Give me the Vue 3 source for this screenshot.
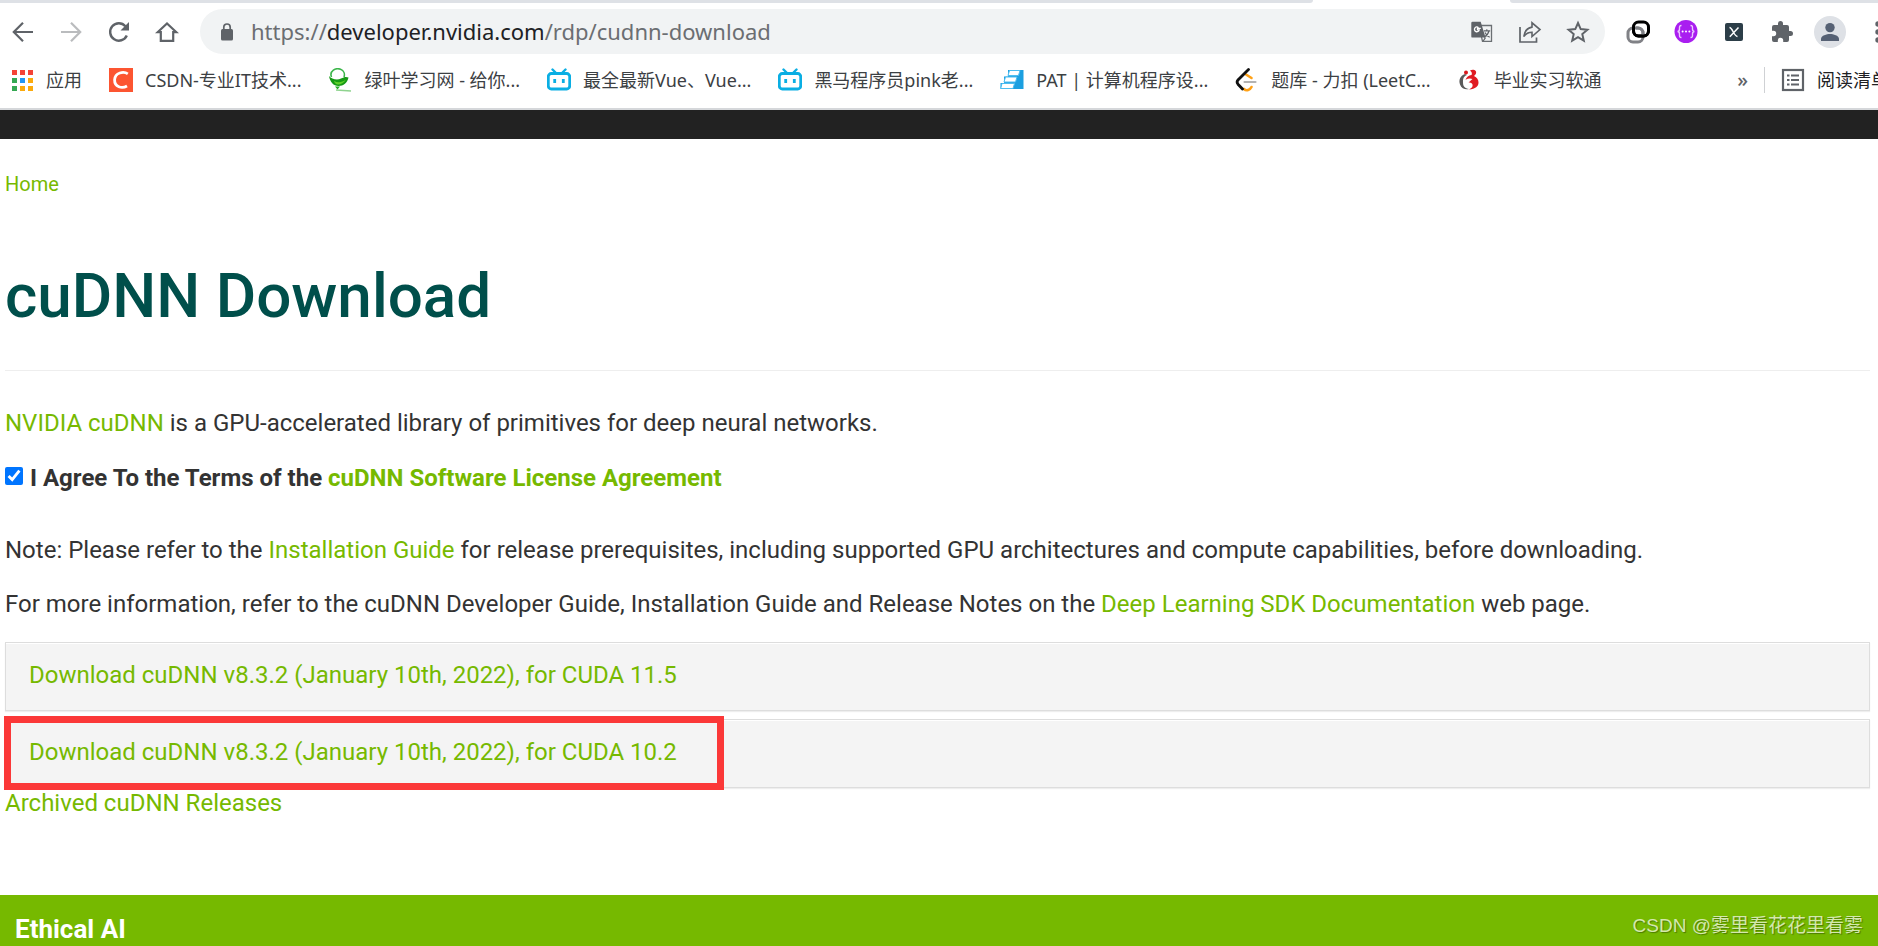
<script setup>
import { ref } from 'vue'

const url = ref('https://developer.nvidia.com/rdp/cudnn-download')
const agreed = ref(true)

const bookmarks = [
  { icon: 'csdn', label: 'CSDN-专业IT技术...' },
  { icon: 'leaf', label: '绿叶学习网 - 给你...' },
  { icon: 'bili', label: '最全最新Vue、Vue...' },
  { icon: 'bili', label: '黑马程序员pink老...' },
  { icon: 'pat', label: 'PAT | 计算机程序设...' },
  { icon: 'leet', label: '题库 - 力扣 (LeetC...' },
  { icon: 'soft', label: '毕业实习软通' }
]

const appColors = ['#f44336', '#f44336', '#f44336', '#34a853', '#2196f3', '#fbaa0c', '#34a853', '#fbaa0c', '#fbaa0c']

const downloads = [
  { label: 'Download cuDNN v8.3.2 (January 10th, 2022), for CUDA 11.5', marked: false },
  { label: 'Download cuDNN v8.3.2 (January 10th, 2022), for CUDA 10.2', marked: true }
]
</script>

<template>
  <div class="page">
    <header class="browser">
      <div class="tabs">
        <div class="tab-left"></div>
        <div class="tab-active"></div>
        <div class="tab-right"></div>
      </div>

      <div class="toolbar">
        <div class="nav">
          <button class="icon-btn" aria-label="Back">
            <svg viewBox="0 0 24 24"><path d="M22 12H3.500M12 2.800L2.800 12l9.200 9.200" fill="none" stroke="#5f6368" stroke-width="2.200" /></svg>
          </button>
          <button class="icon-btn" aria-label="Forward">
            <svg viewBox="0 0 24 24"><path d="M2 12h18.500M12 2.800l9.200 9.200-9.200 9.200" fill="none" stroke="#babcbe" stroke-width="2.200" /></svg>
          </button>
          <button class="icon-btn" aria-label="Reload">
            <svg viewBox="0 0 24 24"><path d="M19.800 15.500A8.700 8.700 0 1 1 18.400 6.200" fill="none" stroke="#5f6368" stroke-width="2.400" /><path d="M22 2v8.500h-8.500z" fill="#5f6368" /></svg>
          </button>
          <button class="icon-btn" aria-label="Home">
            <svg viewBox="0 0 24 24"><path d="M2.600 12.200L12 3.400l9.400 8.800h-3.200v8.700H5.800v-8.700z" fill="none" stroke="#5f6368" stroke-width="2.200" /></svg>
          </button>
        </div>

        <div class="omnibox">
          <svg class="lock" viewBox="0 0 14 18"><rect x="1" y="6" width="12" height="11.500" rx="1.500" fill="#5f6368" /><path d="M3.800 7V4.200a3.200 3.200 0 0 1 6.400 0V7" fill="none" stroke="#5f6368" stroke-width="1.700" /></svg>
          <a class="url" href="#" :aria-label="url">https://<span class="host">developer.nvidia.com</span>/rdp/cudnn-download</a>
          <button class="icon-btn" aria-label="Translate">
            <svg viewBox="0 0 24 24">
              <path d="M9 5.500h12.500v15.800H12.500z" fill="#f1f3f4" stroke="#6b6f73" stroke-width="1.300" />
              <path d="M2.500 1.800h8.200l4.800 15.800h-13a1.200 1.200 0 0 1-1.200-1.200V3a1.200 1.200 0 0 1 1.200-1.200z" fill="#5f6368" />
              <path d="M10.800 8.300H7.500v1.500h1.700A2.400 2.400 0 1 1 8.500 7.600" fill="none" stroke="#fff" stroke-width="1.300" />
              <path d="M13.800 10.800h6.400M16.800 9.200v1.600M19 10.800c-.7 3-2.500 5-5 6.500M15 12.500c1 2.200 2.500 3.500 4.700 4.700M13.200 21l2.300-3.400" fill="none" stroke="#5f6368" stroke-width="1.200" />
            </svg>
          </button>
          <button class="icon-btn" aria-label="Share">
            <svg viewBox="0 0 24 24"><path d="M2 7v15h16.500v-4.500" fill="none" stroke="#5f6368" stroke-width="1.700" /><path d="M14 2.800v4.300C8.500 8 6.500 11.500 5.800 16.500 8 13.500 10.500 12.300 14 12.300v4.200l8-6.900z" fill="none" stroke="#5f6368" stroke-width="1.600" /></svg>
          </button>
          <button class="icon-btn" aria-label="Bookmark this page">
            <svg viewBox="0 0 24 24"><path d="M12 3l2.700 6.100 6.700.6-5.100 4.400 1.500 6.500-5.800-3.400-5.800 3.400 1.500-6.500-5.100-4.400 6.700-.6z" fill="none" stroke="#5f6368" stroke-width="2" /></svg>
          </button>
        </div>

        <div class="extensions">
          <button class="icon-btn" aria-label="Link extension">
            <svg viewBox="0 0 24 24">
              <rect x="2" y="8" width="15" height="14" rx="5" fill="none" stroke="#808186" stroke-width="3" />
              <rect x="7.500" y="2" width="15" height="14" rx="5" fill="none" stroke="#000" stroke-width="3" />
              <path d="M10 8h2a5 5 0 0 1 5 5v3" fill="none" stroke="#808186" stroke-width="3" />
              <path d="M7.500 8v3a5 5 0 0 0 5 5h5a5 5 0 0 0 5-5" fill="none" stroke="#000" stroke-width="3" />
            </svg>
          </button>
          <button class="icon-btn" aria-label="Code extension">
            <svg viewBox="0 0 24 24"><circle cx="12" cy="11.500" r="11.500" fill="#a91ef0" /><path d="M7.500 5.500c-2.300 0-2 1.500-2 3.500 0 1.500-.6 2.500-2 2.500 1.400 0 2 1 2 2.500 0 2-.3 3.500 2 3.500M16.500 5.500c2.300 0 2 1.500 2 3.500 0 1.500.6 2.500 2 2.500-1.400 0-2 1-2 2.500 0 2 .3 3.500-2 3.500" fill="none" stroke="#ecc8ff" stroke-width="1.400" /><g fill="#fff"><circle cx="8.600" cy="11.500" r="1" /><circle cx="12" cy="11.500" r="1" /><circle cx="15.400" cy="11.500" r="1" /></g></svg>
          </button>
          <button class="icon-btn" aria-label="XPath extension">
            <svg viewBox="0 0 24 24"><rect x="3" y="3" width="18" height="18" rx="2" fill="#2c3e48" /><path d="M7.500 7.500c3 0 4.500 9 8 9M16.500 7.500L7.800 16.800" fill="none" stroke="#fff" stroke-width="1.500" /></svg>
          </button>
          <button class="icon-btn" aria-label="Extensions">
            <svg viewBox="0 0 24 24"><path d="M20.500 11H19V7a2 2 0 0 0-2-2h-4V3.500a2.500 2.500 0 0 0-5 0V5H4a2 2 0 0 0-2 2v3.800h1.500a2.700 2.700 0 0 1 0 5.400H2V20a2 2 0 0 0 2 2h3.800v-1.500a2.700 2.700 0 0 1 5.400 0V22H17a2 2 0 0 0 2-2v-4h1.500a2.500 2.500 0 0 0 0-5z" fill="#5f6368" /></svg>
          </button>
          <button class="icon-btn avatar" aria-label="Profile">
            <svg viewBox="0 0 24 24"><circle cx="12" cy="7.600" r="4.700" fill="#566174" /><path d="M3 21v-2.200c0-3.300 5.800-4.800 9-4.800s9 1.500 9 4.800V21z" fill="#566174" /></svg>
          </button>
          <button class="icon-btn" aria-label="Menu">
            <svg viewBox="0 0 24 24"><g fill="#5f6368"><circle cx="12" cy="4" r="2.700" /><circle cx="12" cy="12" r="2.700" /><circle cx="12" cy="20" r="2.700" /></g></svg>
          </button>
        </div>
      </div>

      <nav class="bookmarks" aria-label="Bookmarks">
        <a class="bookmark apps" href="#">
          <svg viewBox="0 0 24 24"><rect v-for="(c, i) in appColors" :key="i" :x="2 + (i % 3) * 8" :y="2 + Math.floor(i / 3) * 8" width="5" height="5" :fill="c" /></svg>
          <span>应用</span>
        </a>
        <a v-for="b in bookmarks" :key="b.label" class="bookmark" href="#">
          <svg v-if="b.icon === 'csdn'" viewBox="0 0 24 24"><rect width="24" height="24" fill="#fc5531" /><path d="M18.800 5.800c-4-2.700-12.800-1.500-13.200 6-.2 7.500 7.500 9 12.400 6.200" fill="none" stroke="#fff" stroke-width="2.800" /></svg>
          <svg v-else-if="b.icon === 'leaf'" viewBox="0 0 24 24"><path d="M3.500 9C1 3 8-.5 12.500 1.200 16 2.500 17 6 16 9" fill="none" stroke="#3bb54a" stroke-width="1.600" /><path d="M1 8c2.500 3 8 4.500 12 2.500 3-1.500 5-2 7.500-1-1 5-5 8.500-10 8.500C5.500 18 2 14 1 8z" fill="#159a15" /><path d="M6 13c4 2 8 1.500 12-1.500-2 3.500-5 5-8 5-2 0-3.500-1.500-4-3.500z" fill="#5fd02a" /><path d="M7 18.500h5l-2.500 3z" fill="#27ad27" /><path d="M8 22l15 1" stroke="#8fd38f" stroke-width="1.300" /></svg>
          <svg v-else-if="b.icon === 'bili'" viewBox="0 0 24 24"><path d="M5.500 1.500l3.500 3.500M18.500 1.500L15 5" stroke="#0aaee3" stroke-width="2.400" stroke-linecap="round" /><rect x="1.300" y="5.500" width="21.400" height="15.500" rx="3" fill="#fff" stroke="#0aaee3" stroke-width="2.800" /><path d="M7.700 11v4M16.300 11v4" stroke="#0aaee3" stroke-width="2.800" /></svg>
          <svg v-else-if="b.icon === 'pat'" viewBox="0 0 24 24"><path d="M8 2h15.500v19H.500v-6H4V8.500h4z" fill="#1b9fe0" /><g fill="#fff" stroke="#4dbdf0" stroke-width="1"><path d="M9.500 2.500H20l-1.500 5H8z" /><path d="M5.500 9H17l-1.500 5H4z" /><path d="M2 15.500h12.500l-1.500 5H.700z" /></g></svg>
          <svg v-else-if="b.icon === 'leet'" viewBox="0 0 24 24"><g fill="none" stroke-width="2.600" stroke-linecap="round"><path d="M11 6.500l5.500 3.500" stroke="#ffa116" /><path d="M9 21c2.500 2.500 6 1 7.500-2" stroke="#ffa116" /><path d="M9.500 14h11" stroke="#b3b3b3" stroke-width="2.200" /><path d="M13.500 1.500L3 12c-1.300 1.500-1 3 0 4.200L7.500 21" stroke="#111" stroke-width="2.800" /></g></svg>
          <svg v-else viewBox="0 0 24 24"><path d="M7 6C2 8 .500 12 2 16.500s6 5.500 9 4.500c-4-.5-6-2.500-6-6.500S5.500 8.500 9 7z" fill="#5a5a5a" /><circle cx="8" cy="4.500" r="2" fill="#d9191d" /><path d="M12 2.500c3-1.500 7-.5 6 3-.3 1-1 1.800-2 2.500 3 1.500 4.500 3.500 4.500 6.500 0 4-3 6.500-9.500 7 3-1.500 4-3 3.500-5-.5-1.500-2-2-4-2l4-3.500c-2-1-4.500-.8-7 .8C8.500 9 10.500 7.500 13.500 7c.8-1.200.5-3-1.500-4.500z" fill="#e01b22" /></svg>
          <span>{{ b.label }}</span>
        </a>
        <div class="bookmarks-end">
          <button class="more" aria-label="More bookmarks">»</button>
          <a class="bookmark reading" href="#">
            <svg viewBox="0 0 24 24"><rect x="2" y="2" width="20" height="20" fill="none" stroke="#5f6368" stroke-width="2.200" /><path d="M6 7.500h2.500M6 12h2.500M6 16.500h2.500M10 7.500h8M10 12h8M10 16.500h8" stroke="#5f6368" stroke-width="2" /></svg>
            <span>阅读清单</span>
          </a>
        </div>
      </nav>
    </header>

    <div class="site-bar"></div>

    <main class="content">
      <a class="crumb" href="#">Home</a>
      <h1>cuDNN Download</h1>
      <hr />
      <p><a href="#">NVIDIA cuDNN</a> is a GPU-accelerated library of primitives for deep neural networks.</p>
      <div class="agree">
        <input id="agree" v-model="agreed" type="checkbox" />
        <label for="agree">I Agree To the Terms of the <a href="#">cuDNN Software License Agreement</a></label>
      </div>
      <p>Note: Please refer to the <a href="#">Installation Guide</a> for release prerequisites, including supported GPU architectures and compute capabilities, before downloading.</p>
      <p>For more information, refer to the cuDNN Developer Guide, Installation Guide and Release Notes on the <a href="#">Deep Learning SDK Documentation</a> web page.</p>
      <div class="downloads">
        <div v-for="d in downloads" :key="d.label" class="download">
          <a href="#">{{ d.label }}</a>
          <div v-if="d.marked" class="marker"></div>
        </div>
      </div>
      <a class="archive" href="#">Archived cuDNN Releases</a>
    </main>

    <footer class="footer">
      <strong>Ethical AI</strong>
      <span class="watermark">CSDN @雾里看花花里看雾</span>
    </footer>
  </div>
</template>

<style>
body {
  margin: 0;
  background: #fff;
}
</style>

<style scoped>
.page {
  display: flex;
  flex-direction: column;
  min-height: 100vh;
  overflow: hidden;
  color: #333;
  font-family: Roboto, "Liberation Sans", sans-serif;
  font-size: 24px;
  line-height: 30px;
}

a {
  color: #76b900;
  text-decoration: none;
}

button {
  padding: 0;
  border: 0;
  background: none;
}

svg {
  display: block;
}

.browser {
  border-bottom: 2px solid #d5d7da;
  font-family: "Noto Sans", "Noto Sans CJK SC", sans-serif;
}

.tabs {
  display: flex;
  height: 3px;
  background: #fff;
}

.tab-left {
  flex: 1313;
  background: #dee1e6;
  border-bottom-right-radius: 4px;
}

.tab-active {
  flex: 197;
}

.tab-right {
  flex: 368;
  background: #dee1e6;
  border-bottom-left-radius: 4px;
}

.toolbar {
  display: flex;
  align-items: center;
  padding: 6px 0 0 11px;
}

.nav,
.extensions {
  display: flex;
  gap: 24px;
}

.icon-btn {
  flex: none;
  width: 24px;
  height: 24px;
}

.icon-btn svg {
  width: 24px;
  height: 24px;
}

.omnibox {
  display: flex;
  flex: 1;
  align-items: center;
  gap: 24px;
  height: 45px;
  margin: 0 21px;
  padding: 0 15px 0 20px;
  border-radius: 23px;
  background: #f1f3f4;
}

.lock {
  width: 14px;
  height: 18px;
}

.url {
  flex: 1;
  margin-left: -7px;
  padding-bottom: 2px;
  color: #6b6e72;
  font-size: 22px;
  white-space: nowrap;
}

.host {
  color: #202124;
}

.extensions {
  align-items: center;
  margin-right: -12px;
}

.avatar {
  margin: 0 -4px;
  padding: 4px;
  width: 32px;
  height: 32px;
  border-radius: 50%;
  background: #dee1e6;
}

.bookmarks {
  display: flex;
  align-items: center;
  gap: 27px;
  height: 52px;
  padding: 0 0 2px 10px;
  font-size: 18px;
  line-height: 26px;
  white-space: nowrap;
}

.bookmark {
  display: flex;
  flex: none;
  align-items: center;
  gap: 12px;
  color: #3c4043;
}

.bookmark svg {
  width: 24px;
  height: 24px;
}

.bookmarks-end {
  display: flex;
  flex: none;
  align-items: center;
  gap: 16px;
  margin-left: auto;
  margin-right: -11px;
}

.more {
  color: #5f6368;
  font: 500 20px/24px "Noto Sans", sans-serif;
}

.reading {
  padding-left: 16px;
  border-left: 1px solid #cfd1d4;
  color: #202124;
}

.site-bar {
  height: 29px;
  background: #222;
}

.content {
  padding: 33px 8px 77px 5px;
}

.crumb,
.archive {
  display: block;
}

.crumb {
  font-size: 20px;
  line-height: 24px;
}

h1 {
  margin: 64px 0 38px;
  color: #004f4b;
  font-size: 62px;
  font-weight: 500;
  line-height: 72px;
}

hr {
  height: 1px;
  margin: 0 0 37px;
  border: 0;
  background: #eee;
}

p {
  margin: 0 0 24px;
}

p:last-of-type {
  margin-bottom: 23px;
}

.agree {
  display: flex;
  gap: 7px;
  margin: 25px 0 42px;
  font-weight: 700;
}

.agree input {
  width: 18px;
  height: 18px;
  margin: 4px 0 0;
}

.downloads {
  display: flex;
  flex-direction: column;
  gap: 8px;
}

.download {
  position: relative;
  padding: 17px 23px 20px;
  border: 1px solid #ddd;
  background: #f4f4f4;
  box-shadow: inset 0 1px 0 #fff, 0 1px 1px #eee;
}

.marker {
  position: absolute;
  top: -4px;
  left: -2px;
  box-sizing: border-box;
  width: 720px;
  height: 74px;
  border: 7px solid #fb3838;
}

.footer {
  position: relative;
  flex: 1;
  padding: 19px 15px 0;
  background: #76b900;
}

.footer strong {
  color: #fff;
  font-size: 26px;
}

.watermark {
  position: absolute;
  top: 17px;
  right: 15px;
  color: #d4e8ad;
  font: 19px/28px "Liberation Sans", "Noto Sans CJK SC", sans-serif;
  text-shadow: 1px 1px 1px #4c7a00;
}
</style>
